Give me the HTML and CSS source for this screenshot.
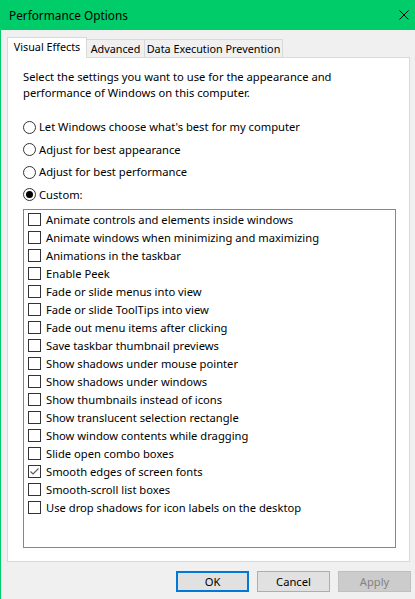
FILE: index.html
```html
<!DOCTYPE html>
<html>
<head>
<meta charset="utf-8">
<link rel="stylesheet" href="styles.css">
</head>
<body>
<div class="window">
  <div class="titlebar">
    <span class="title">Performance Options</span>
    <svg class="close" width="10" height="10" viewBox="0 0 10 10"><path d="M0.5 0.5 L9.5 9.5 M9.5 0.5 L0.5 9.5" stroke="#000" stroke-width="1" fill="none"/></svg>
  </div>
  <div class="content">
    <div class="tabs">
      <div class="tab active tab-ve">Visual Effects</div>
      <div class="tab tab-adv">Advanced</div>
      <div class="tab tab-dep">Data Execution Prevention</div>
    </div>
    <div class="panel">
      <p class="desc">Select the settings you want to use for the appearance and performance of Windows on this computer.</p>
      <div class="radios">
        <div class="radio"><span class="circle"></span><span>Let Windows choose what's best for my computer</span></div>
        <div class="radio"><span class="circle"></span><span>Adjust for best appearance</span></div>
        <div class="radio"><span class="circle"></span><span>Adjust for best performance</span></div>
        <div class="radio"><span class="circle on"></span><span>Custom:</span></div>
      </div>
      <div class="listbox">
        <div class="item"><span class="box"></span><span>Animate controls and elements inside windows</span></div>
        <div class="item"><span class="box"></span><span>Animate windows when minimizing and maximizing</span></div>
        <div class="item"><span class="box"></span><span>Animations in the taskbar</span></div>
        <div class="item"><span class="box"></span><span>Enable Peek</span></div>
        <div class="item"><span class="box"></span><span>Fade or slide menus into view</span></div>
        <div class="item"><span class="box"></span><span>Fade or slide ToolTips into view</span></div>
        <div class="item"><span class="box"></span><span>Fade out menu items after clicking</span></div>
        <div class="item"><span class="box"></span><span>Save taskbar thumbnail previews</span></div>
        <div class="item"><span class="box"></span><span>Show shadows under mouse pointer</span></div>
        <div class="item"><span class="box"></span><span>Show shadows under windows</span></div>
        <div class="item"><span class="box"></span><span>Show thumbnails instead of icons</span></div>
        <div class="item"><span class="box"></span><span>Show translucent selection rectangle</span></div>
        <div class="item"><span class="box"></span><span>Show window contents while dragging</span></div>
        <div class="item"><span class="box"></span><span>Slide open combo boxes</span></div>
        <div class="item"><span class="box"><svg width="11" height="11" viewBox="0 0 11 11"><path d="M1.5 5.5 L4 8 L9.5 2.5" stroke="#5a5a5a" stroke-width="1.1" fill="none"/></svg></span><span>Smooth edges of screen fonts</span></div>
        <div class="item"><span class="box"></span><span>Smooth-scroll list boxes</span></div>
        <div class="item"><span class="box"></span><span>Use drop shadows for icon labels on the desktop</span></div>
      </div>
    </div>
    <div class="buttons">
      <div class="btn default">OK</div>
      <div class="btn">Cancel</div>
      <div class="btn disabled">Apply</div>
    </div>
  </div>
</div>
</body>
</html>
```
FILE: styles.css
```css
* { box-sizing: border-box; }
html, body { margin: 0; padding: 0; }
body {
  width: 415px;
  height: 599px;
  overflow: hidden;
  background: #f0f0f0;
  font-family: "Noto Sans", "Open Sans", sans-serif;
  font-size: 11.2px;
  color: #000;
}
.window {
  height: 599px;
  border-left: 1px solid #00cc6a;
  display: flex;
  flex-direction: column;
}
.titlebar {
  height: 30px;
  background: #00cc6a;
  display: flex;
  align-items: center;
  justify-content: space-between;
  padding: 0 6px 0 8px;
  flex: none;
}
.title { font-size: 11.8px; line-height: 16px; }
.close { display: block; margin-top: -1px; }
.content {
  flex: 1;
  padding: 7px 5px 0 6px;
  display: flex;
  flex-direction: column;
}
.tabs {
  display: flex;
  align-items: flex-end;
  height: 20px;
}
.tab {
  border-top: 1px solid #d9d9d9;
  border-right: 1px solid #d9d9d9;
  background: #f0f0f0;
  height: 18px;
  line-height: 17px;
  font-size: 10.8px;
  text-align: center;
  white-space: nowrap;
  flex: none;
}
.tab.active {
  background: #fff;
  height: 21px;
  line-height: 18px;
  margin-bottom: -1px;
  position: relative;
  z-index: 1;
  border-left: 1px solid #d9d9d9;
}
.tab-ve { width: 80px; }
.tab-adv { width: 58px; }
.tab-dep { width: 138px; }
.panel {
  background: #fff;
  border: 1px solid #d9d9d9;
  height: 505px;
  padding: 11px 13px 0 15px;
}
.desc {
  margin: 0;
  line-height: 16px;
  width: 330px;
}
.radios {
  margin-top: 18px;
  display: flex;
  flex-direction: column;
  gap: 6.67px;
}
.radio {
  display: flex;
  align-items: center;
  height: 16px;
  line-height: 16px;
  white-space: nowrap;
}
.circle {
  width: 13px;
  height: 13px;
  border: 1px solid #333;
  border-radius: 50%;
  margin-right: 3px;
  display: flex;
  align-items: center;
  justify-content: center;
  flex: none;
  background: #fff;
}
.circle.on::after {
  content: "";
  width: 7px;
  height: 7px;
  border-radius: 50%;
  background: #000;
}
.listbox {
  margin-top: 6px;
  height: 339px;
  border: 1px solid #828790;
  padding: 1px 0 0 4px;
}
.item {
  height: 18px;
  display: flex;
  align-items: center;
  line-height: 18px;
  white-space: nowrap;
}
.box {
  width: 13px;
  height: 13px;
  border: 1px solid #333;
  margin-right: 5px;
  flex: none;
  display: flex;
  align-items: center;
  justify-content: center;
  background: #fff;
}
.box svg { display: block; }
.buttons {
  display: flex;
  justify-content: flex-end;
  gap: 8px;
  margin-top: 9px;
  margin-right: -1px;
}
.btn {
  width: 73px;
  height: 21px;
  border: 1px solid #adadad;
  background: #e1e1e1;
  text-align: center;
  line-height: 19px;
}
.btn.default {
  border: 2px solid #0078d7;
  line-height: 17px;
}
.btn.disabled {
  background: #cccccc;
  border-color: #bfbfbf;
  color: #838383;
}
```
